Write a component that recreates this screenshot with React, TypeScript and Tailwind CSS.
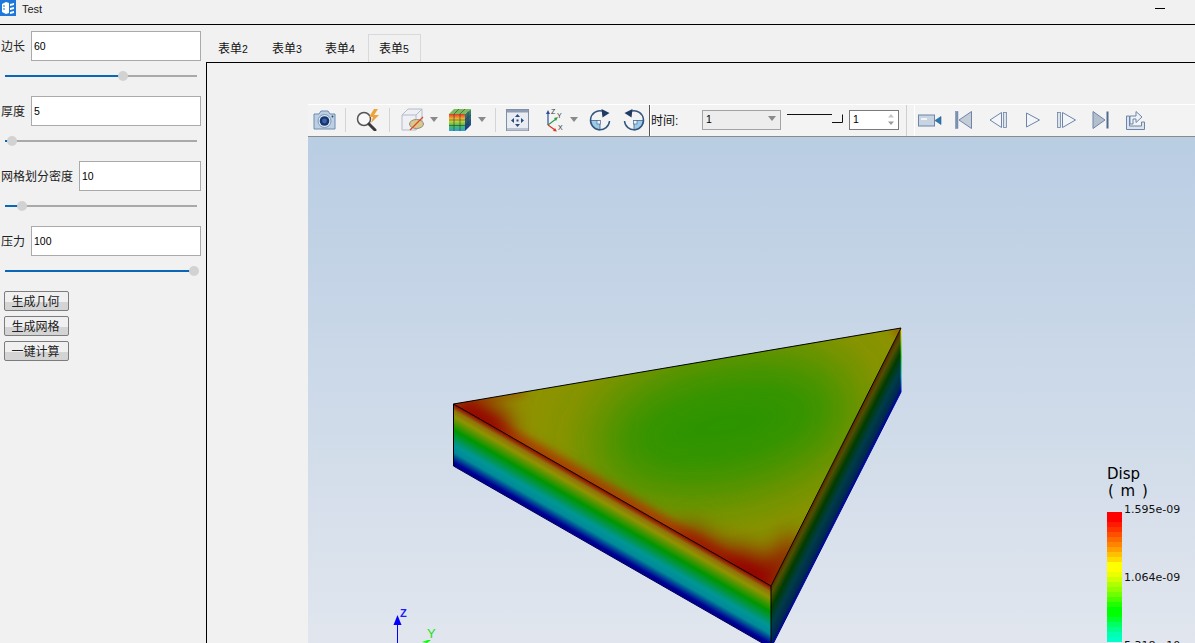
import type { ReactNode } from "react";

// ─── Left panel ───────────────────────────────────────────────────────────────

const params = [
  { label: "边长", value: "60", knob: 123 },
  { label: "厚度", value: "5", knob: 12 },
  { label: "网格划分密度", value: "10", knob: 22 },
  { label: "压力", value: "100", knob: 194 },
];

function Slider({ knob }: { knob: number }) {
  // knob is the centre of the handle, measured from the left of the window
  return (
    <div className="h-[35px] pl-[5px] pt-[14px]">
      <div className="relative h-[2px] w-[192px] bg-[#a9a9a9]">
        <div className="h-full bg-[#0a66b7]" style={{ width: knob - 5 }} />
        <div
          className="absolute top-[-4px] h-[10px] w-[10px] rounded-full bg-[#d2d2d2]"
          style={{ left: knob - 10 }}
        />
      </div>
    </div>
  );
}

function Param({ label, value, knob }: { label: string; value: string; knob: number }) {
  return (
    <div>
      <div className="flex h-[30px] items-center">
        <span className="ml-px whitespace-nowrap pt-[2px] text-[12px] text-[#222]">{label}</span>
        <div
          className="ml-auto mr-[5px] flex h-[30px] items-center border border-[#aaaaaa] bg-white pl-[2px] pt-[2px] text-[10.5px] text-black"
          style={{ width: label.length > 2 ? 122 : 170 }}
        >
          {value}
        </div>
      </div>
      <Slider knob={knob} />
    </div>
  );
}

function PanelButton({ children }: { children: ReactNode }) {
  return (
    <button className="h-[20px] w-[65px] rounded-[2px] border border-[#7c7c7c] bg-gradient-to-b from-[#f0f0f0] from-55% to-[#d4d4d4] to-55% pr-[2px] text-center text-[12px] leading-[20px] text-[#222]">
      {children}
    </button>
  );
}

function Tab({ name, num, width, active }: { name: string; num: string; width: string; active?: boolean }) {
  return (
    <div
      className={`h-[28px] ${width} ${active ? "border border-b-0 border-[#d9d9d9] pl-[10px] leading-[29px]" : "pl-[11px] leading-[31px]"}`}
    >
      {name}
      <span className="text-[10.5px]">{num}</span>
    </div>
  );
}

// ─── Toolbar icons ────────────────────────────────────────────────────────────

function Caret({ className }: { className: string }) {
  return (
    <svg viewBox="0 0 8 5" className={`h-[5px] w-[8px] shrink-0 ${className}`}>
      <path d="M0 0h8L4 5z" fill="#8a8a8a" />
    </svg>
  );
}

function Sep({ className }: { className: string }) {
  return <div className={`h-[24px] w-px shrink-0 bg-[#d4d4d4] ${className}`} />;
}

function CameraIcon() {
  return (
    <svg viewBox="0 0 23 20" className="ml-[5px] h-[20px] w-[23px] shrink-0">
      <path d="M1 4h5l2-3h7l2 3h5v15H1z" fill="#bcd0e4" stroke="#6f8cae" />
      <circle cx="11.5" cy="11" r="6.5" fill="#dfe9f3" stroke="#7d98b8" />
      <circle cx="11.5" cy="11" r="4.8" fill="#17346f" />
      <circle cx="11.5" cy="11" r="2.4" fill="#3d66a8" />
      <circle cx="19.5" cy="6.5" r="0.9" fill="#24406f" />
    </svg>
  );
}

function ZoomBoltIcon() {
  return (
    <svg viewBox="0 0 25 22" className="ml-[10px] h-[22px] w-[25px] shrink-0">
      <circle cx="8" cy="10" r="6.5" fill="#f8f8f8" stroke="#555" strokeWidth="1.5" />
      <path d="M13 15l6 6" stroke="#3a3a3a" strokeWidth="3" strokeLinecap="round" />
      <path d="M18 0l-5 8h4l-2 6 8-8h-5l4-6z" fill="#eda23a" />
    </svg>
  );
}

function CubeIcon() {
  return (
    <svg viewBox="0 0 23 23" className="ml-[11px] h-[23px] w-[23px] shrink-0">
      <path d="M1 7l6-6h14v14l-6 7H1z" fill="#eef0f4" stroke="#b4bcc8" />
      <path d="M1 7h14v15M15 7l6-6" fill="none" stroke="#b4bcc8" />
      <ellipse cx="15.5" cy="16" rx="7" ry="4.5" fill="#dcc78a" stroke="#8d8d80" />
      <path d="M9 22L22 9" stroke="#d8482a" strokeWidth="1.2" />
    </svg>
  );
}

function ColorCubeIcon() {
  return (
    <svg viewBox="0 0 22 22" className="ml-[11px] h-[22px] w-[22px] shrink-0">
      <defs>
        <linearGradient id="cubeFront" x1="0" y1="0" x2="0" y2="1">
          <stop offset="0" stopColor="#e8392c" />
          <stop offset="0.35" stopColor="#f1d52a" />
          <stop offset="0.65" stopColor="#4ec24a" />
          <stop offset="1" stopColor="#2f9fd0" />
        </linearGradient>
        <linearGradient id="cubeSide" x1="0" y1="0" x2="0" y2="1">
          <stop offset="0" stopColor="#3f8f5a" />
          <stop offset="1" stopColor="#142f9a" />
        </linearGradient>
      </defs>
      <path d="M0 5h16v17H0z" fill="url(#cubeFront)" />
      <path d="M16 5l6-5v16l-6 6z" fill="url(#cubeSide)" />
      <path d="M0 5l5-5h17l-6 5z" fill="#7dbb5a" />
      <path d="M5 5v17M11 5v17M0 11h16M0 16.500h16M5 5l5-5M11 5l5-5M19 2.500v16M16 11l6-5M16 16.500l6-5" stroke="#2d3a4a" strokeWidth="0.6" fill="none" />
    </svg>
  );
}

function FitIcon() {
  return (
    <svg viewBox="0 0 23 22" className="ml-[10px] h-[22px] w-[23px] shrink-0">
      <rect x="0.500" y="0.500" width="22" height="21" fill="#e9edf3" stroke="#7f8fa6" />
      <rect x="1" y="1" width="21" height="2.500" fill="#8e9db3" />
      <rect x="1" y="19" width="21" height="2.500" fill="#b9c2cf" />
      <path d="M11.500 5l-2.500 3h5zM11.500 18l-2.500-3h5zM5 11.500l3-2.500v5zM18 11.500l-3-2.500v5z" fill="#2b4a78" />
      <rect x="10.500" y="10.500" width="2" height="2" fill="#2b4a78" />
    </svg>
  );
}

function AxesIcon() {
  return (
    <svg viewBox="0 0 19 24" className="ml-[16px] h-[24px] w-[19px] shrink-0 font-['Liberation_Sans',sans-serif]">
      <path d="M3 17V5" stroke="#2a4f9c" strokeWidth="1.200" />
      <path d="M3 2l-2 4h4z" fill="#2a4f9c" />
      <path d="M3 17l8-6" stroke="#2f9a4a" strokeWidth="1.200" />
      <path d="M13 9l-4 1 2 3z" fill="#2f9a4a" />
      <path d="M3 17l7 5" stroke="#d8342a" strokeWidth="1.200" />
      <path d="M12 23.500l-4-.5 2-3z" fill="#d8342a" />
      <text x="6" y="6" fontSize="7" fill="#333">Z</text>
      <text x="12" y="10" fontSize="7" fill="#333">Y</text>
      <text x="13" y="22" fontSize="7" fill="#333">X</text>
    </svg>
  );
}

function RotateIcon({ flip, className }: { flip?: boolean; className: string }) {
  return (
    <svg viewBox="0 0 22 22" className={`h-[22px] w-[22px] shrink-0 ${flip ? "-scale-x-100" : ""} ${className}`}>
      <path d="M11 11.500H1.500A9.500 9.500 0 0 0 11 21z" fill="#9ccbea" stroke="#3f6288" strokeWidth="0.800" />
      <rect x="8" y="11.500" width="3.500" height="3.500" fill="#e8f2fa" stroke="#3f6288" strokeWidth="0.600" />
      <path d="M20.500 12A9.500 9.500 0 1 1 13 2" fill="none" stroke="#35557c" strokeWidth="1.500" />
      <path d="M12.500 0L20.500 4L13.500 8.500z" fill="#1f3a63" />
    </svg>
  );
}

// ─── Playback icons ───────────────────────────────────────────────────────────

function Media({ w, className, children }: { w: number; className: string; children: ReactNode }) {
  return (
    <svg viewBox={`0 0 ${w} 20`} width={w} height={20} className={`shrink-0 ${className}`}>
      {children}
    </svg>
  );
}

const mediaStroke = "#6d85a8";

function Toolbar() {
  return (
    <div className="flex h-[33px] items-center border-t border-t-white border-b border-b-[#8a8a8a] bg-[#f3f3f3] pb-[2px]">
      <CameraIcon />
      <Sep className="ml-[9px]" />
      <ZoomBoltIcon />
      <Sep className="ml-[8px]" />
      <CubeIcon />
      <Caret className="ml-[6px]" />
      <ColorCubeIcon />
      <Caret className="ml-[7px]" />
      <Sep className="ml-[9px]" />
      <FitIcon />
      <AxesIcon />
      <Caret className="ml-[6px]" />
      <RotateIcon className="ml-[11px]" />
      <RotateIcon flip className="ml-[12px]" />
      <div className="-mb-[2px] ml-[4px] h-[31px] w-px shrink-0 bg-[#555]" />

      {/* time controls */}
      <div className="-mb-[2px] flex h-[31px] w-[52px] shrink-0 items-center border-l border-l-white pt-[1px] text-[12px] text-[#111]">
        时间:
      </div>
      <div className="flex h-[20px] w-[79px] shrink-0 items-center justify-between border border-[#a3a3a3] bg-[#ededed] pl-[3px] pr-[3px] text-[10.5px] text-black">
        1
        <svg viewBox="0 0 8 5" className="mb-[2px] mr-[1px] h-[5px] w-[8px]">
          <path d="M0 0h8L4 5z" fill="#8a8a8a" />
        </svg>
      </div>
      <svg viewBox="0 0 56 12" className="mb-[2px] ml-[6px] h-[12px] w-[56px] shrink-0">
        <path d="M0 1.500h45" stroke="#111" />
        <path d="M45 9.500h10.500v-8" fill="none" stroke="#111" />
      </svg>
      <div className="ml-[6px] flex h-[20px] w-[50px] shrink-0 items-center justify-between border border-[#7a7a7a] bg-white pl-[3px] pr-[4px] text-[10.5px] text-black">
        1
        <svg viewBox="0 0 6 11" className="h-[11px] w-[6px]">
          <path d="M3 0l3 3.500H0z" fill="#c4c4c4" />
          <path d="M3 11L0 7.500h6z" fill="#9a9a9a" />
        </svg>
      </div>
      <div className="-mb-[2px] ml-[7px] h-[31px] w-px shrink-0 bg-[#cfcfcf]" />
      <div className="-mb-[2px] ml-[7px] h-[31px] w-px shrink-0 bg-white" />

      {/* playback */}
      <Media w={24} className="ml-[3px]">
        <rect x="0.500" y="5" width="16" height="11" fill="#c9d4e2" stroke={mediaStroke} />
        <rect x="3" y="8" width="6" height="2" fill="#f2f4f7" />
        <path d="M17 10.500l6-4v8z" fill="#2a78b0" stroke="#2c5c8a" strokeWidth="0.600" />
      </Media>
      <Media w={18} className="ml-[13px]">
        <rect x="0.500" y="1.500" width="2.500" height="17" fill="#7d92b0" stroke={mediaStroke} strokeWidth="0.500" />
        <path d="M16.500 1.500v17L4 10z" fill="#c4ccd8" stroke={mediaStroke} />
      </Media>
      <Media w={18} className="ml-[16px]">
        <path d="M12.500 2.500v15L1 10z" fill="#f3f5f8" stroke={mediaStroke} />
        <rect x="14.500" y="2.500" width="3" height="15" fill="#dde3eb" stroke={mediaStroke} strokeWidth="0.800" />
      </Media>
      <Media w={14} className="ml-[19px]">
        <path d="M0.500 3v14l13-7z" fill="#f3f5f8" stroke={mediaStroke} />
      </Media>
      <Media w={19} className="ml-[17px]">
        <rect x="0.500" y="2.500" width="3" height="15" fill="#dde3eb" stroke={mediaStroke} strokeWidth="0.800" />
        <path d="M5.500 2.500v15l13-7.500z" fill="#f3f5f8" stroke={mediaStroke} />
      </Media>
      <Media w={17} className="ml-[16px]">
        <path d="M1 1.500v17l12-8.500z" fill="#b4bfce" stroke={mediaStroke} />
        <rect x="14.500" y="1.500" width="2" height="17" fill="#4f6a90" />
      </Media>
      <Media w={19} className="ml-[17px]">
        <path d="M0.500 6h3v10h12v-4h3v7.500H0.500z" fill="#dbe3ec" stroke={mediaStroke} />
        <path d="M4 14V6h6V1.500L16 7l-6 5.500V9H7v5z" fill="#eef2f6" stroke={mediaStroke} />
      </Media>
    </div>
  );
}

// ─── 3D result ────────────────────────────────────────────────────────────────

// legend bar from top to bottom, one entry per 5px band
const legendBands = [
  "#ff0000", "#ff0000", "#ff1a00", "#ff3300", "#ff5000", "#ff6a00", "#ff8400", "#ffa000",
  "#ffc000", "#ffdc00", "#ffff00", "#ffff00", "#ecff00", "#d0ff00", "#b0ff00", "#90ff00",
  "#70ff00", "#48ff00", "#20ff00", "#00ff00", "#00ff00", "#00ff30", "#00ff60", "#00ff90", "#00ffb0", "#00ffc8",
];

function Model() {
  return (
    <svg viewBox="308 137 887 506" className="absolute inset-0 h-[506px] w-[887px]">
      <defs>
        <clipPath id="topFace">
          <polygon points="453.500,404 901,328 771,586" />
        </clipPath>
        <filter id="soft" x="-50%" y="-50%" width="200%" height="200%">
          <feGaussianBlur stdDeviation="32" />
        </filter>
        <filter id="softSmall" x="-30%" y="-30%" width="160%" height="160%">
          <feGaussianBlur stdDeviation="12" />
        </filter>
        <filter id="softEdge" x="-30%" y="-30%" width="160%" height="160%">
          <feGaussianBlur stdDeviation="5" />
        </filter>
        <linearGradient id="leftFace" gradientUnits="userSpaceOnUse" x1="453.500" y1="404" x2="426.800" y2="450.600">
          <stop offset="0" stopColor="#920000" />
          <stop offset="0.1" stopColor="#93700a" />
          <stop offset="0.2" stopColor="#8f9400" />
          <stop offset="0.42" stopColor="#009600" />
          <stop offset="0.66" stopColor="#009696" />
          <stop offset="0.78" stopColor="#008a98" />
          <stop offset="0.94" stopColor="#000094" />
          <stop offset="1" stopColor="#000080" />
        </linearGradient>
        <linearGradient id="rightFace" gradientUnits="userSpaceOnUse" x1="771" y1="586" x2="796.700" y2="599">
          <stop offset="0" stopColor="#5e2a00" />
          <stop offset="0.13" stopColor="#505000" />
          <stop offset="0.36" stopColor="#003c00" />
          <stop offset="0.62" stopColor="#003c48" />
          <stop offset="0.86" stopColor="#00284e" />
          <stop offset="1" stopColor="#0000a0" />
        </linearGradient>
        <linearGradient id="cornerEdge" x1="0" y1="0" x2="0" y2="1">
          <stop offset="0" stopColor="#f0e000" />
          <stop offset="0.45" stopColor="#00b000" />
          <stop offset="0.75" stopColor="#00a0b0" />
          <stop offset="1" stopColor="#0000c0" />
        </linearGradient>
      </defs>

      <polygon points="453.500,404 771,586 771,648 453.500,466" fill="url(#leftFace)" />
      <polygon points="771,586 901,328 901,392 771,648" fill="url(#rightFace)" />
      <rect x="900.500" y="329" width="1" height="63" fill="url(#cornerEdge)" />

      <g clipPath="url(#topFace)">
        <rect x="440" y="320" width="470" height="280" fill="#8f9300" />
        <g filter="url(#soft)">
          <ellipse cx="725" cy="425" rx="135" ry="70" fill="#2b9400" transform="rotate(-12 725 425)" />
          <ellipse cx="735" cy="425" rx="85" ry="55" fill="#2b9400" />
        </g>
        <g filter="url(#softEdge)">
          <path d="M453.500 404L771 586" stroke="#a83c00" strokeWidth="16" />
          <path d="M453.500 404L525 392" stroke="#9a5800" strokeWidth="7" />
          <circle cx="899" cy="330" r="6" fill="#9a5000" />
        </g>
        <g filter="url(#softSmall)">
          <path d="M453.500 404L505 434" stroke="#920000" strokeWidth="34" />
          <path d="M680 533L771 586" stroke="#920000" strokeWidth="18" />
          <path d="M730 562L771 586" stroke="#920000" strokeWidth="40" />
          <path d="M771 586L795 540" stroke="#920000" strokeWidth="20" />
        </g>
      </g>

      <g stroke="#000" strokeWidth="1" fill="none">
        <path d="M453.500 404L901 328L771 586Z" />
        <path d="M453.500 404V466M771 586V648" />
        <path d="M453.500 466L771 648" stroke="#000060" />
        <path d="M771 648L901 392" stroke="#0000a0" />
      </g>

      {/* triad */}
      <path d="M397.500 643V622" stroke="#0000ff" />
      <path d="M397.500 615l-4 10h8z" fill="#0000ff" />
      <path d="M422 642l6-2h3l-4 3z" fill="#00ff00" />

      {legendBands.map((color, i) => (
        <rect key={i} x="1107" y={512 + i * 5} width="15" height="5" fill={color} />
      ))}
    </svg>
  );
}

function Viewport() {
  return (
    <div className="relative flex-1 overflow-hidden bg-gradient-to-b from-[#b9cde3] to-[#e1e6ee] font-['DejaVu_Sans',sans-serif] text-black">
      <Model />
      <span className="absolute left-[92px] top-[468px] font-['Liberation_Sans',sans-serif] text-[11px] font-bold text-[#1a1aff]">Z</span>
      <span className="absolute left-[119px] top-[487px] font-['Liberation_Sans',sans-serif] text-[13px] text-[#20e020]">Y</span>
      <div className="absolute left-[799px] top-[329px] text-[15px] leading-[17px]">
        Disp
        <div className="pl-[1px] tracking-[1px]">( m )</div>
      </div>
      <span className="absolute left-[816px] top-[366px] text-[11px] leading-[14px] text-[#111]">1.595e-09</span>
      <span className="absolute left-[816px] top-[434px] text-[11px] leading-[14px] text-[#111]">1.064e-09</span>
      <span className="absolute left-[816px] top-[502px] text-[11px] leading-[14px] text-[#111]">5.318e-10</span>
    </div>
  );
}

// ─── Page ─────────────────────────────────────────────────────────────────────

export default function App() {
  return (
    <div className="flex h-[643px] w-[1195px] flex-col overflow-hidden bg-[#f1f1f1] font-['Liberation_Sans','Noto_Sans_CJK_SC',sans-serif]">
      {/* title bar */}
      <div className="flex h-[25px] shrink-0 border-b border-black pb-[8px]">
        <svg viewBox="0 0 16 16" className="h-[16px] w-[16px] shrink-0">
          <rect width="16" height="16" fill="#1e78dc" />
          <path d="M2 4l4-2 3 1v10l-3 1-4-2zM10 4l4-1v2l-4 1zM10 8l4-1v2l-4 1zM10 12l4-1v2l-4 1z" fill="#fff" />
          <path d="M3 6h2M3 9h2" stroke="#1e78dc" />
        </svg>
        <span className="ml-[6px] text-[11px] leading-[19px] text-[#222]">Test</span>
        <div className="ml-[1113px] mt-[8px] h-px w-[10px] bg-black" />
      </div>

      <div className="flex min-h-0 flex-1">
        {/* parameters */}
        <div className="w-[206px] shrink-0 pt-[6px]">
          {params.map((p) => (
            <Param key={p.label} {...p} />
          ))}
          <div className="ml-[4px] flex flex-col gap-[5px]">
            <PanelButton>生成几何</PanelButton>
            <PanelButton>生成网格</PanelButton>
            <PanelButton>一键计算</PanelButton>
          </div>
        </div>

        <div className="flex min-w-0 flex-1 flex-col">
          {/* tabs */}
          <div className="flex h-[38px] shrink-0 items-end border-b border-black pl-px text-[12px] text-[#111]">
            <Tab name="表单" num="2" width="w-[54px]" />
            <Tab name="表单" num="3" width="w-[53px]" />
            <Tab name="表单" num="4" width="w-[54px]" />
            <Tab name="表单" num="5" width="w-[53px]" active />
          </div>

          {/* tab body */}
          <div className="flex min-h-0 flex-1 flex-col border-l border-black pl-[101px] pt-[41px]">
            <Toolbar />
            <Viewport />
          </div>
        </div>
      </div>
    </div>
  );
}
